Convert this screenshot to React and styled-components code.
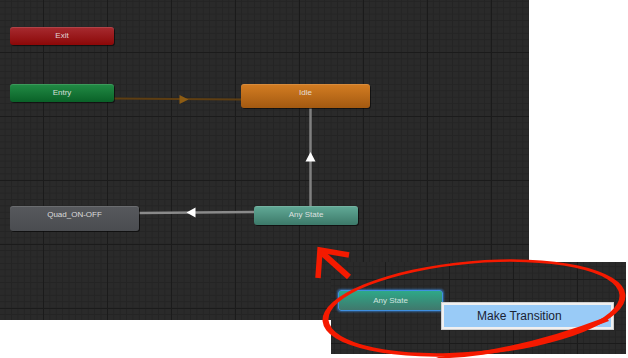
import React from "react";
import styled, { createGlobalStyle, css } from "styled-components";

const Global = createGlobalStyle`
  html, body { margin: 0; padding: 0; background: #ffffff; }
  #root { width: 628px; height: 358px; }
`;

const gridBg = (ox, oy) => css`
  background-color: #2a2a2a;
  background-image:
    linear-gradient(to right, #1b1b1b 1px, transparent 1px),
    linear-gradient(to bottom, #1b1b1b 1px, transparent 1px),
    linear-gradient(to right, #242424 1px, transparent 1px),
    linear-gradient(to bottom, #242424 1px, transparent 1px);
  background-size: 64px 64px, 64px 64px, 6.4px 6.4px, 6.4px 6.4px;
  background-position: ${ox}px ${oy}px, ${ox}px ${oy}px, ${ox}px ${oy}px, ${ox}px ${oy}px;
`;

const Page = styled.div`
  position: relative;
  width: 628px;
  height: 358px;
  overflow: hidden;
  font-family: "Liberation Sans", Arial, sans-serif;
`;

const GraphCanvas = styled.div`
  position: relative;
  width: 529px;
  height: 320px;
  ${gridBg(43, 52)}
`;

const InsetShot = styled.div`
  position: absolute;
  left: 331px;
  top: 262px;
  width: 295px;
  height: 92px;
  ${gridBg(54, 17)}
`;

const Layer = styled.svg`
  position: absolute;
  left: 0;
  top: 0;
  pointer-events: none;
`;

const palettes = {
  exit: ["#a72b30", "#8c0808"],
  entry: ["#228c45", "#0a6128"],
  idle: ["#d47d22", "#a35911"],
  state: ["#57595d", "#4a4c50"],
  any: ["#62aa97", "#3c7969"],
  anySel: ["#2ea888", "#40786c"],
};

const StateNode = styled.div`
  position: absolute;
  left: ${(p) => p.$x}px;
  top: ${(p) => p.$y}px;
  width: ${(p) => p.$w}px;
  height: ${(p) => p.$h}px;
  box-sizing: border-box;
  border-radius: 3px;
  background: linear-gradient(
    to bottom,
    ${(p) => palettes[p.$kind][0]},
    ${(p) => palettes[p.$kind][1]}
  );
  box-shadow: 1px 1px 0 rgba(0, 0, 0, 0.55), inset 0 1px 0 rgba(255, 255, 255, 0.12);
  display: flex;
  justify-content: center;
  align-items: flex-start;
  color: rgba(235, 235, 235, 0.9);
  font-size: 8px;
  line-height: 18px;
  white-space: nowrap;
  ${(p) =>
    p.$selected &&
    css`
      border: 1px solid #3f8fe0;
      box-shadow: 0 0 2px 1px rgba(60, 140, 230, 0.6);
      line-height: 19px;
      color: rgba(225, 240, 236, 0.9);
    `}
`;

const ContextMenu = styled.div`
  position: absolute;
  left: 110px;
  top: 40px;
  width: 173px;
  height: 28px;
  box-sizing: border-box;
  background: #f0f0f0;
  border: 1px solid #cfcfcf;
  padding: 2px;
  display: flex;
`;

const MenuItem = styled.div`
  flex: 1;
  background: #99cbf7;
  color: #1a2233;
  font-family: "Liberation Sans", Arial, sans-serif;
  font-size: 12px;
  line-height: 22px;
  padding-left: 33px;
  white-space: nowrap;
`;

export default function App() {
  return (
    <Page>
      <Global />
      <GraphCanvas>
        <Layer width="529" height="320" viewBox="0 0 529 320">
          <line x1="114" y1="98.5" x2="241" y2="99.5" stroke="#5e3e12" strokeWidth="2.2" />
          <polygon points="179.5,95 179.5,104 188.5,99.5" fill="#8d5c13" />
          <line x1="310.5" y1="108" x2="310.5" y2="206" stroke="#808080" strokeWidth="2.5" />
          <polygon points="310.5,152 305.5,161.5 315.5,161.5" fill="#ffffff" />
          <line x1="139" y1="213" x2="254" y2="212" stroke="#8a8a8a" strokeWidth="2.5" />
          <polygon points="186.5,212.5 195.5,207.5 195.5,217.5" fill="#ffffff" />
        </Layer>
        <StateNode $kind="exit" $x={10} $y={27} $w={104} $h={18}>Exit</StateNode>
        <StateNode $kind="entry" $x={10} $y={84} $w={104} $h={18}>Entry</StateNode>
        <StateNode $kind="idle" $x={241} $y={84} $w={129} $h={24}>Idle</StateNode>
        <StateNode $kind="state" $x={10} $y={206} $w={129} $h={25}>Quad_ON-OFF</StateNode>
        <StateNode $kind="any" $x={254} $y={206} $w={104} $h={19}>Any State</StateNode>
      </GraphCanvas>
      <InsetShot>
        <StateNode $kind="anySel" $selected $x={7} $y={28} $w={105} $h={21}>Any State</StateNode>
        <ContextMenu>
          <MenuItem>Make Transition</MenuItem>
        </ContextMenu>
      </InsetShot>
      <Layer width="628" height="358" viewBox="0 0 628 358">
        <g transform="rotate(-5 474 308)" fill="#f51a00">
          <path
            fillRule="evenodd"
            d="M 322 308 A 152 47 0 1 0 626 308 A 152 47 0 1 0 322 308 Z
               M 328 307.5 A 146 44 0 1 0 620 307.5 A 146 44 0 1 0 328 307.5 Z"
          />
        </g>
        <path d="M 436 357 Q 520 350 606 317 L 609 321 Q 522 355 440 358.5 Z" fill="#f51a00" />
        <g stroke="#f51a00" strokeWidth="5.5" fill="none" strokeLinejoin="miter">
          <polyline points="349,255 320,250 318,278" />
          <line x1="321" y1="252" x2="349" y2="277" strokeWidth="6" />
        </g>
      </Layer>
    </Page>
  );
}
